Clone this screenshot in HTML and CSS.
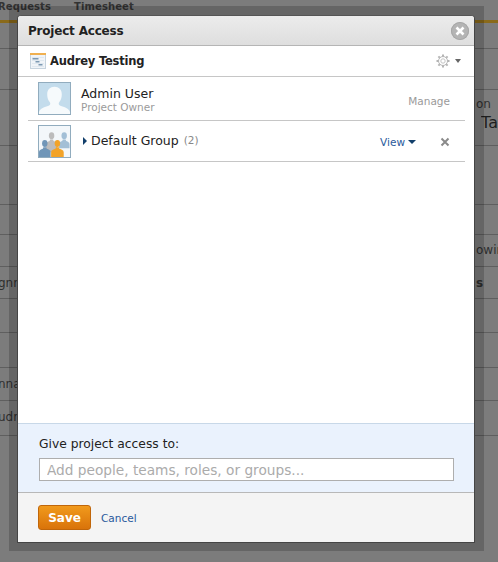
FILE: index.html
```html
<!DOCTYPE html>
<html lang="en">
  <head>
    <meta charset="UTF-8" />
    <title>Project Access</title>
    <link rel="stylesheet" href="styles.css">
  </head>
  <body>
    <!-- page behind the dialog -->
    <div class="page">
      <div class="page-tabs">
        <span class="page-tab page-tab-first">Requests</span>
        <span class="page-tab">Timesheet</span>
      </div>
      <div class="page-row page-row-a"></div>
      <div class="page-row page-row-b"></div>
      <div class="page-row page-row-c"><span class="page-text-right">on</span><span class="page-title-right">Ta</span></div>
      <div class="page-row page-row-d"></div>
      <div class="page-row page-row-e"></div>
      <div class="page-row page-row-f"><span class="page-text-right">owin</span></div>
      <div class="page-row page-row-g"><span class="page-text-left">gnn</span><span class="page-text-right page-bold">s</span></div>
      <div class="page-row page-row-h"></div>
      <div class="page-row page-row-i"></div>
      <div class="page-row page-row-j"><span class="page-text-left">nna</span></div>
      <div class="page-row page-row-k"><span class="page-text-left">udr</span></div>
    </div>

    <div class="overlay">
      <div class="dialog">
        <div class="dialog-header">
          <h1>Project Access</h1>
          <span class="close-btn">
            <svg width="12" height="12" viewBox="0 0 12 12"><path d="M2.5 2.5l7 7M9.5 2.5l-7 7" stroke="#fff" stroke-width="2.6" /></svg>
          </span>
        </div>

        <div class="project-bar">
          <svg class="project-icon" width="16" height="16" viewBox="0 0 16 16">
            <rect x="0.5" y="0.5" width="15" height="15" fill="#f0f4f8" stroke="#c6d3de" />
            <rect x="0" y="0" width="16" height="2" fill="#f0b050" />
            <path d="M2 4.500h12M2 7.500h12M2 10.500h12M2 13.500h12" stroke="#e0e8ef" stroke-width="1" />
            <path d="M2.500 5h6v1.500h-6zM5.500 8h4v1.500h-4zM8.500 11h4v1.500h-4z" fill="#7b98b2" />
          </svg>
          <span class="project-name">Audrey Testing</span>
          <span class="project-tools">
            <svg width="14" height="14" viewBox="0 0 14 14">
              <path d="M7 0.500v2.200M7 11.300v2.200M0.500 7h2.200M11.300 7h2.200M2.400 2.400l1.500 1.500M10.100 10.100l1.500 1.500M11.600 2.400l-1.500 1.500M3.900 10.100l-1.500 1.500" stroke="#b4b4b4" stroke-width="2" />
              <circle cx="7" cy="7" r="4.500" fill="#fff" stroke="#b4b4b4" stroke-width="1" />
              <circle cx="7" cy="7" r="2.200" fill="none" stroke="#c4c4c4" stroke-width="1" />
            </svg>
            <span class="caret caret-grey"></span>
          </span>
        </div>

        <div class="dialog-body">
          <div class="member member-user">
            <svg class="avatar" width="33" height="33" viewBox="0 0 34 34">
              <rect x="0.5" y="0.5" width="33" height="33" fill="#c3dcec" stroke="#8eaabd" />
              <path d="M1 33v-2c1-4 6-5 10-6.500 2-1 2-2.500 1-4-2-2.500-2.500-5-2.500-8 0-4.500 3-7.500 7.500-7.500s7.500 3 7.500 7.500c0 3-.5 5.500-2.500 8-1 1.500-1 3 1 4 4 1.500 9 2.500 10 6.500v2z" fill="#f6fafc" />
            </svg>
            <div class="member-info">
              <div class="member-name">Admin User</div>
              <div class="member-role">Project Owner</div>
            </div>
            <span class="manage">Manage</span>
          </div>

          <div class="member member-group">
            <svg class="avatar" width="33" height="33" viewBox="0 0 34 34">
              <rect x="0.5" y="0.5" width="33" height="33" fill="#f3f7fa" stroke="#8eaabd" />
              <g fill="#bcbcbc" transform="translate(14 11)">
                <ellipse cy="0" rx="2.800" ry="3.600" />
                <path d="M-6 17v-8c0-2 2-3 4-3.500l.5-1.500h3l.5 1.500c2 .5 4 1.500 4 3.500v8z" />
              </g>
              <g fill="#a3bfd6" transform="translate(27 11)">
                <ellipse cy="0" rx="2.800" ry="3.600" />
                <path d="M-5.500 13v-4c0-2 1.500-3 3.500-3.500l.5-1.500h3l.5 1.500c2 .5 3.500 1.500 3.500 3.500v4z" />
              </g>
              <g fill="#7096b8" transform="translate(7 19)">
                <ellipse cy="0" rx="2.800" ry="3.600" />
                <path d="M-6 14v-5c0-2 2-3 4-3.500l.5-1.500h3l.5 1.500c2 .5 4 1.500 4 3.500v5z" />
              </g>
              <g fill="#f2a328" transform="translate(20 19)">
                <ellipse cy="0" rx="2.800" ry="3.600" />
                <path d="M-6.500 14v-5c0-2 2.500-3 4.500-3.500l.5-1.500h3l.5 1.500c2 .5 4.500 1.500 4.500 3.500v5z" />
              </g>
            </svg>
            <span class="expander"></span>
            <span class="group-name">Default Group</span>
            <span class="group-count">(2)</span>
            <span class="view-link">View<span class="caret caret-blue"></span></span>
            <svg class="remove-icon" width="10" height="10" viewBox="0 0 10 10"><path d="M1.500 1.500l7 7M8.500 1.500l-7 7" stroke="#8a8a8a" stroke-width="2" /></svg>
          </div>
        </div>

        <div class="give-access">
          <label for="people">Give project access to:</label>
          <input id="people" type="text" placeholder="Add people, teams, roles, or groups..." />
        </div>

        <div class="dialog-footer">
          <button type="button" class="btn-save">Save</button>
          <a href="#" class="cancel">Cancel</a>
        </div>
      </div>
    </div>
  </body>
</html>
```

FILE: styles.css
```css
html,
body {
  margin: 0;
  padding: 0;
  height: 562px;
  overflow: hidden;
}

body {
  position: relative;
  background-color: #7c7c7c;
  font-family: "DejaVu Sans", "Liberation Sans", sans-serif;
  color: #222;
}

/* background page */
.page {
  color: #2f2f2f;
  font-size: 12px;
  line-height: 14px;
}

.page-tabs {
  height: 19px;
  padding-top: 1px;
  border-bottom: 3px solid #8a6a1a;
  display: flex;
  white-space: nowrap;
  font-weight: bold;
  color: #333;
  font-size: 10px;
  letter-spacing: 0.1px;
  line-height: 12px;
}

.page-tab-first {
  margin-left: -2px;
  flex: 0 0 50px;
}

.page-tab-first + .page-tab {
  margin-left: 23px;
}

.page-row {
  display: flow-root;
  box-sizing: border-box;
  border-bottom: 1px solid #5f5f5f;
}

.page-row-a { height: 26px; }
.page-row-b { height: 41px; }
.page-row-c { height: 56px; }
.page-row-d { height: 59px; }
.page-row-e { height: 30px; }
.page-row-f { height: 32px; }
.page-row-g { height: 32px; }
.page-row-h { height: 34px; }
.page-row-i { height: 35px; }
.page-row-j { height: 33px; }
.page-row-k { height: 35px; }

.page-text-right {
  float: right;
  width: 22px;
  margin-top: 8px;
  overflow: hidden;
}

.page-row-c .page-text-right {
  margin-top: 7px;
}

.page-title-right {
  float: right;
  clear: right;
  width: 17px;
  margin-top: 2px;
  font-size: 16px;
  line-height: 19px;
  color: #1e1e1e;
  overflow: hidden;
}

.page-text-left {
  float: left;
  margin-top: 9px;
  margin-left: -2px;
}

.page-bold {
  margin-top: 9px;
  font-weight: bold;
}

/* dialog */
.overlay {
  position: absolute;
  left: 9px;
  top: 6px;
  width: 475px;
  height: 545px;
  box-sizing: border-box;
  padding: 9px 9px 8px 8px;
  background-color: rgba(0, 0, 0, 0.18);
}

.dialog {
  display: flex;
  flex-direction: column;
  height: 100%;
  box-sizing: border-box;
  background-color: #fff;
  border: 1px solid #454545;
  border-top-color: #555;
  border-radius: 4px 4px 0 0;
}

.dialog-header {
  display: flex;
  align-items: center;
  justify-content: space-between;
  height: 29px;
  padding: 0 5px 0 10px;
  background: linear-gradient(#ececec, #dedede);
  border-bottom: 1px solid #b5b5b5;
  border-radius: 3px 3px 0 0;
}

.dialog-header h1 {
  margin: 0;
  font-size: 12px;
  letter-spacing: -0.2px;
  font-weight: bold;
  color: #222;
}

.close-btn {
  display: flex;
  align-items: center;
  justify-content: center;
  width: 18px;
  height: 18px;
  border-radius: 50%;
  background-color: #b4b4b4;
  box-shadow: inset 0 0 0 1px #a6a6a6;
}

.project-bar {
  display: flex;
  align-items: center;
  height: 30px;
  padding: 0 13px 0 12px;
  border-bottom: 1px solid #c6c6c6;
}

.project-icon {
  margin-right: 4px;
}

.project-name {
  font-size: 11.5px;
  letter-spacing: -0.2px;
  font-weight: bold;
  color: #222;
}

.project-tools {
  display: flex;
  align-items: center;
  margin-left: auto;
  gap: 5px;
}

.caret {
  display: inline-block;
  width: 0;
  height: 0;
  border-left: 3.5px solid transparent;
  border-right: 3.5px solid transparent;
  border-top: 4px solid #666;
}

.caret-blue {
  border-left-width: 4px;
  border-right-width: 4px;
  border-top-color: #123f6b;
  margin-left: 3px;
  vertical-align: 2px;
}

.dialog-body {
  flex: 1;
  padding: 0 9px 0 10px;
}

.member {
  display: flex;
  align-items: center;
  border-bottom: 1px solid #c6c6c6;
}

.member-user {
  height: 43px;
}

.member-group {
  height: 40px;
}

.avatar {
  margin-left: 10px;
  flex: none;
}

.member-info {
  margin-left: 10px;
  margin-top: 2px;
}

.member-name {
  font-size: 12.5px;
  line-height: 14px;
  color: #222;
}

.member-role {
  font-size: 10.5px;
  line-height: 12px;
  color: #9b9b9b;
}

.manage {
  margin-left: auto;
  margin-right: 15px;
  margin-top: 4px;
  font-size: 10.5px;
  color: #9a9a9a;
}

.expander {
  width: 0;
  height: 0;
  margin-left: 12px;
  margin-right: 4px;
  border-top: 4px solid transparent;
  border-bottom: 4px solid transparent;
  border-left: 4px solid #123f6b;
}

.group-name {
  margin-bottom: 2px;
  font-size: 12.5px;
  color: #222;
}

.group-count {
  margin-left: 5px;
  margin-bottom: 2px;
  font-size: 10.5px;
  color: #888;
}

.view-link {
  margin-left: auto;
  margin-right: 24px;
  margin-top: 2px;
  font-size: 10.5px;
  color: #2a5a9c;
}

.remove-icon {
  margin-top: 2px;
  margin-right: 15px;
}

.give-access {
  height: 70px;
  box-sizing: border-box;
  padding: 14px 20px 0 21px;
  background-color: #eaf2fd;
  border-top: 1px solid #c8d8e8;
  border-bottom: 1px solid #b8b8b8;
}

.give-access label {
  display: block;
  font-size: 12.3px;
  line-height: 13px;
  color: #222;
}

.give-access input {
  display: block;
  width: 100%;
  height: 23px;
  box-sizing: border-box;
  margin-top: 7px;
  padding: 0 7px;
  border: 1px solid #aeaeae;
  background-color: #fff;
  font-family: inherit;
  font-size: 13.7px;
  outline: none;
}

.give-access input::placeholder {
  color: #ababab;
  opacity: 1;
}

.dialog-footer {
  display: flex;
  align-items: center;
  height: 49px;
  padding: 0 20px;
  background-color: #f4f4f4;
}

.btn-save {
  width: 53px;
  height: 25px;
  padding: 0;
  border: 1px solid #c0660a;
  border-radius: 3px;
  background: linear-gradient(#f19a1c, #d9730a);
  color: #fff;
  font-family: inherit;
  font-size: 12px;
  font-weight: bold;
  cursor: pointer;
}

.cancel {
  margin-left: 10px;
  font-size: 10.5px;
  color: #2a5a9c;
  text-decoration: none;
}
```
